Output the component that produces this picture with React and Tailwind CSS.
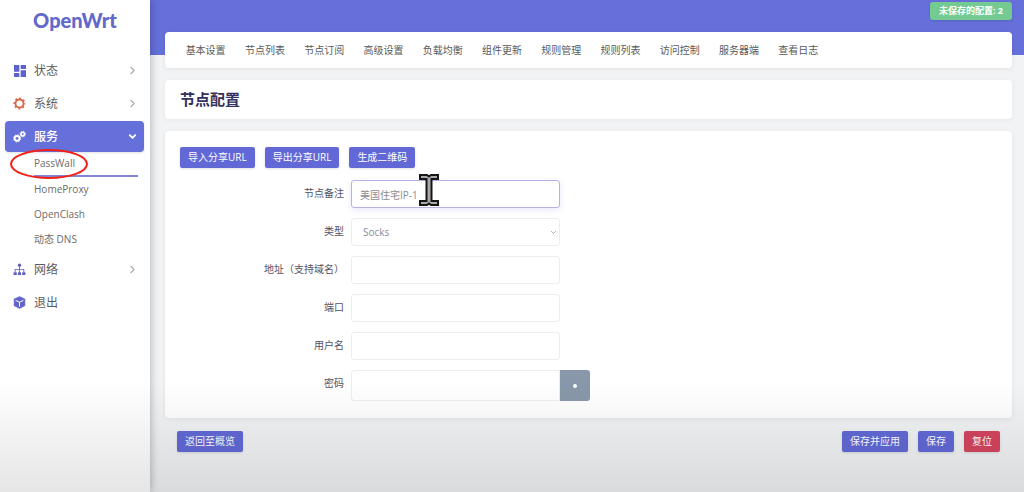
import { useState } from "react";
import { ChevronDown, ChevronRight } from "lucide-react";
import { MdDashboard } from "react-icons/md";

const tabs = [
  "基本设置",
  "节点列表",
  "节点订阅",
  "高级设置",
  "负载均衡",
  "组件更新",
  "规则管理",
  "规则列表",
  "访问控制",
  "服务器端",
  "查看日志",
];

const services = ["PassWall", "HomeProxy", "OpenClash", "动态 DNS"];

function GearIcon() {
  return (
    <svg width="13" height="13" viewBox="0 0 24 24" fill="none" stroke="currentColor" className="text-[#d9694a]">
      <circle cx="12" cy="12" r="7.4" strokeWidth="3.4" />
      <circle cx="12" cy="12" r="9.8" strokeWidth="2.8" strokeDasharray="3.6 4.097" strokeDashoffset="1.8" />
    </svg>
  );
}

function GearsIcon() {
  return (
    <svg width="13" height="13" viewBox="0 0 24 24" fill="none" stroke="currentColor">
      <circle cx="7.5" cy="15.5" r="4.4" strokeWidth="3.4" />
      <circle cx="7.5" cy="15.5" r="6.6" strokeWidth="1.8" strokeDasharray="2.6 2.584" />
      <circle cx="18" cy="7.5" r="3.3" strokeWidth="3" />
      <circle cx="18" cy="7.5" r="5.1" strokeWidth="1.6" strokeDasharray="2 2.006" />
    </svg>
  );
}

function NetworkIcon() {
  return (
    <svg width="13" height="13" viewBox="0 0 24 24" fill="currentColor" className="text-[#5e5fbd]">
      <circle cx="12" cy="4" r="3" />
      <path d="M11.2 6h1.6v5h8v6h-1.6v-4.4h-6.4V17h-1.6v-4.4H4.8V17H3.2v-6h8z" />
      <rect x="1" y="17" width="6" height="5" rx="1" />
      <rect x="9" y="17" width="6" height="5" rx="1" />
      <rect x="17" y="17" width="6" height="5" rx="1" />
    </svg>
  );
}

function CubeIcon() {
  return (
    <svg width="13" height="13" viewBox="0 0 24 24" className="text-[#6064c8]">
      <path d="M12 1l10 4.5v12.5L12 23 2 18V5.500z" fill="currentColor" stroke="currentColor" strokeLinejoin="round" />
      <path d="M5.500 8.500L12 11.500l6.500-3M12 11.500V19" fill="none" stroke="#fff" strokeWidth="1.800" strokeLinecap="round" />
    </svg>
  );
}

function MenuItem({ icon, label, active, arrow }) {
  return (
    <a
      href="#"
      className={`flex h-[31px] items-center rounded pr-[5px] pl-2 text-xs ${
        active ? "bg-[#6570da] font-medium text-white shadow-sm" : "text-[#5c5c5c]"
      }`}
    >
      <span className="flex w-[21px] items-center">{icon}</span>
      <span className="flex-1">{label}</span>
      <span className="flex w-[13px] justify-center">
        {arrow && (active ? <ChevronDown size={11} strokeWidth={4} /> : <ChevronRight size={13} className="text-[#aaa]" />)}
      </span>
    </a>
  );
}

function Button({ children, color = "bg-[#6269d6]" }) {
  return (
    <button type="button" className={`h-[21px] rounded-xs px-2 text-[10px] text-white shadow-sm ${color}`}>
      {children}
    </button>
  );
}

function Row({ id, label, children }) {
  return (
    <div className="flex items-start gap-[7px]">
      <label htmlFor={id} className="w-[164px] text-right text-[10px] leading-[26px] text-[#525266]">
        {label}
      </label>
      {children}
    </div>
  );
}

const field = "w-[209px] rounded-[3px] border border-[#ececf1] bg-white text-[10px] text-[#8c8c94] outline-none";

export default function App() {
  const [remark, setRemark] = useState("美国住宅IP-1");
  const [showPassword, setShowPassword] = useState(false);

  return (
    <div className="relative flex min-h-screen bg-[#f1f3f5] font-['Open_Sans','Noto_Sans_CJK_SC',sans-serif]">
      {/* Sidebar */}
      <aside className="z-10 w-[150px] shrink-0 bg-white shadow-[1px_0_8px_rgba(0,0,0,0.25)]">
        <div className="flex h-[55px] justify-center pt-[6px]">
          <a href="#" className="h-7 font-['Lato','Noto_Sans_CJK_SC',sans-serif] text-[20px] leading-7 font-black text-[#6269cb]">
            OpenWrt
          </a>
        </div>
        <nav className="flex flex-col gap-[2px] pr-[6px] pl-[5px]">
          <MenuItem icon={<MdDashboard size={16} className="-ml-px text-[#5c62d0]" />} label="状态" arrow />
          <MenuItem icon={<GearIcon />} label="系统" arrow />
          <div>
            <MenuItem icon={<GearsIcon />} label="服务" active arrow />
            <ul className="pr-[6px] pl-[29px]">
              {services.map((name, i) => (
                <li key={name} className="relative">
                  <a
                    href="#"
                    className={`flex h-[25px] items-center text-[10px] text-[#6b6b6b] ${
                      i === 0 ? "border-b-2 border-[#8085d2]" : ""
                    }`}
                  >
                    {name}
                  </a>
                  {i === 0 && (
                    <svg
                      width="80"
                      height="32"
                      viewBox="0 0 80 32"
                      fill="none"
                      className="pointer-events-none absolute -top-1 -left-[25px]"
                    >
                      <ellipse cx="40" cy="16" rx="38" ry="14" stroke="#f32219" strokeWidth="2" />
                    </svg>
                  )}
                </li>
              ))}
            </ul>
          </div>
          <MenuItem icon={<NetworkIcon />} label="网络" arrow />
          <MenuItem icon={<CubeIcon />} label="退出" />
        </nav>
      </aside>

      {/* Main content */}
      <div className="min-w-0 flex-1 bg-linear-to-b from-[#6570da] from-[55px] to-transparent to-[55px] pr-3 pl-[15px]">
        <header className="flex h-8 justify-end pt-[2px]">
          <button type="button" className="h-[18px] rounded-[3px] bg-[#74cb92] px-[9px] text-[9px] font-bold text-white shadow-sm">
            未保存的配置: 2
          </button>
        </header>

        <main className="flex flex-col gap-3">
          <nav className="rounded bg-white px-[11px] shadow-[0_1px_5px_rgba(0,0,0,0.07)]">
            <div className="grid max-w-[652px] grid-cols-11">
              {tabs.map((tab) => (
                <a key={tab} href="#" className="text-center text-[10px] leading-9 whitespace-nowrap text-[#5a5a5a]">
                  {tab}
                </a>
              ))}
            </div>
          </nav>

          <h2 className="rounded bg-white px-[15px] text-[15px] leading-[39px] font-bold text-[#32325d] shadow-[0_1px_5px_rgba(0,0,0,0.05)]">
            节点配置
          </h2>

          <form className="rounded bg-white px-[15px] pt-4 pb-[17px] shadow-[0_1px_5px_rgba(0,0,0,0.07)]">
            <div className="mb-3 flex gap-[10px]">
              <Button>导入分享URL</Button>
              <Button>导出分享URL</Button>
              <Button>生成二维码</Button>
            </div>
            <div className="flex flex-col gap-[10px]">
              <Row id="remark" label="节点备注">
                <div className="relative">
                  <input
                    id="remark"
                    value={remark}
                    onChange={(e) => setRemark(e.target.value)}
                    className="block h-7 w-[209px] rounded-[3px] border border-[#b5b1e3] bg-white px-2 text-[10px] text-[#8c8c94] shadow-[0_2px_6px_rgba(98,105,214,0.15)] outline-none"
                  />
                  {/* Text cursor */}
                  <svg
                    width="22"
                    height="34"
                    viewBox="0 0 22 34"
                    className="pointer-events-none absolute -top-[7px] left-[67px]"
                  >
                    <path
                      d="M2 2h7l2 1.5L13 2h7v4h-6.5v22H20v4h-7l-2-1.5L9 32H2v-4h6.5V6H2z"
                      fill="#aaa"
                      stroke="#161616"
                      strokeWidth="2"
                    />
                  </svg>
                </div>
              </Row>
              <Row id="type" label="类型">
                <div className="relative">
                  <select id="type" className={`block h-7 appearance-none px-[11px] ${field}`}>
                    <option>Socks</option>
                  </select>
                  <ChevronDown size={9} className="pointer-events-none absolute top-[10px] right-[2px] text-[#888]" />
                </div>
              </Row>
              <Row id="address" label="地址（支持域名）">
                <input id="address" className={`h-7 px-2 ${field}`} />
              </Row>
              <Row id="port" label="端口">
                <input id="port" className={`h-7 px-2 ${field}`} />
              </Row>
              <Row id="username" label="用户名">
                <input id="username" className={`h-7 px-2 ${field}`} />
              </Row>
              <Row id="password" label="密码">
                <div className="flex">
                  <input
                    id="password"
                    type={showPassword ? "text" : "password"}
                    className={`h-[31px] rounded-r-none px-2 ${field}`}
                  />
                  <button
                    type="button"
                    aria-label="密码"
                    onClick={() => setShowPassword(!showPassword)}
                    className="flex h-[31px] w-[30px] items-center justify-center rounded-r-[3px] bg-[#8898aa]"
                  >
                    <span className="size-1 rounded-full bg-white" />
                  </button>
                </div>
              </Row>
            </div>
          </form>

          <div className="flex gap-[10px] px-3 pt-px">
            <Button>返回至概览</Button>
            <div className="flex-1" />
            <Button>保存并应用</Button>
            <Button>保存</Button>
            <Button color="bg-[#d4455f]">复位</Button>
          </div>
        </main>
      </div>

      {/* Bottom shade */}
      <div className="pointer-events-none absolute inset-x-0 bottom-0 z-20 h-28 bg-linear-to-b from-transparent to-black/10" />
    </div>
  );
}
